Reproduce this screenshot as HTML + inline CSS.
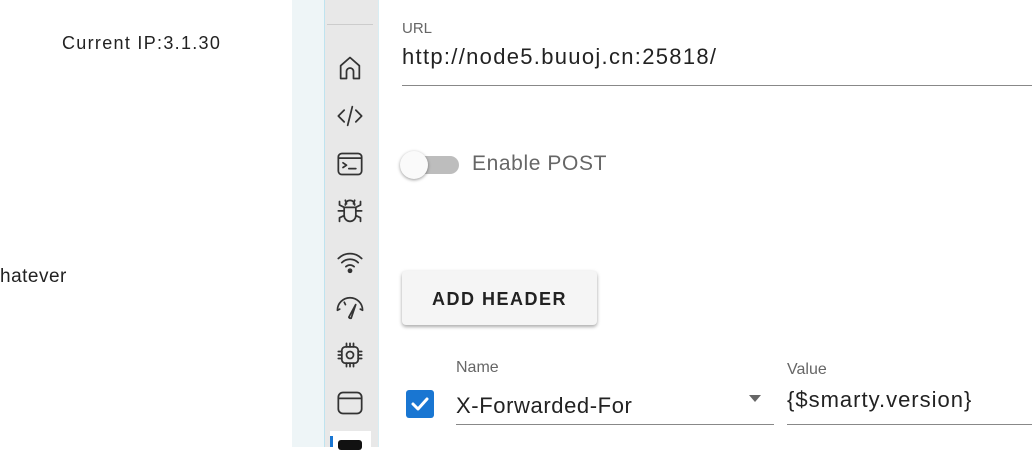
<!DOCTYPE html><html><head><style>
body{margin:0;width:1032px;height:447px;overflow:hidden;position:relative;font-family:"Liberation Sans",Arial,sans-serif;background:#fff}
.a{position:absolute;white-space:nowrap}
svg{position:absolute;fill:none;stroke:#333;stroke-width:1.5;stroke-linecap:round;stroke-linejoin:round}
</style></head><body>
<div class="a" style="left:62px;top:33px;font-size:18px;letter-spacing:1.3px;color:#222">Current IP:3.1.30</div>
<div class="a" style="left:0;top:266px;font-size:19px;letter-spacing:0.5px;color:#222">hatever</div>
<div class="a" style="left:292px;top:0;width:32px;height:447px;background:#eef5f7;border-right:1px solid #bfe3ef"></div>
<div class="a" style="left:325px;top:0;width:53px;height:447px;background:#e8e8e8;border-right:1px solid #d8edf3"></div>
<div class="a" style="left:327px;top:24px;width:46px;height:1px;background:#ccc"></div>
<svg style="left:336px;top:54px" width="28" height="28" viewBox="0 0 24 24"><path d="M4 21V10L12 3l8 7v11h-5v-6a3 3 0 0 0-6 0v6z"/></svg>
<svg style="left:336px;top:102px" width="28" height="28" viewBox="0 0 24 24"><path d="M7 7l-5 5 5 5M17 7l5 5-5 5M14 4l-4 16"/></svg>
<svg style="left:336px;top:150px" width="28" height="28" viewBox="0 0 24 24"><rect x="2" y="3" width="20" height="18" rx="3"/><path d="M2 7h20M6 11l3 2-3 2M11 16h6"/></svg>
<svg style="left:336px;top:198px" width="28" height="28" viewBox="0 0 24 24"><path d="M8 6a4 4 0 0 1 8 0M7 8h10v7a5 5 0 0 1-10 0zM8 2l1 3M16 2l-1 3M7 11H2M17 11h5M7 15l-4 2v3M17 15l4 2v3M7 8L3 6v-3M17 8l4-2v-3"/></svg>
<svg style="left:336px;top:248px" width="28" height="28" viewBox="0 0 24 24"><path d="M2 9a14 14 0 0 1 20 0M5 12.5a10 10 0 0 1 14 0M8.5 16a5 5 0 0 1 7 0"/><circle cx="12" cy="19.5" r="1.3" fill="#333"/></svg>
<svg style="left:334px;top:294px" width="32" height="28" viewBox="0 0 28 24"><path d="M3 14a11 11 0 0 1 22 0M3 14l2-1M9 7l1 2M25 14l-2-1M15 21l4-12-6 11a2 2 0 0 0 2 1z"/></svg>
<svg style="left:336px;top:341px" width="28" height="28" viewBox="0 0 24 24"><rect x="5" y="5" width="14" height="14" rx="3"/><circle cx="12" cy="12" r="3"/><path d="M9 2v3M12 2v3M15 2v3M9 19v3M12 19v3M15 19v3M2 9h3M2 12h3M2 15h3M19 9h3M19 12h3M19 15h3"/></svg>
<svg style="left:336px;top:389px" width="28" height="28" viewBox="0 0 24 24"><rect x="2" y="3" width="20" height="18" rx="4"/><path d="M2 8h20"/></svg>
<div class="a" style="left:330px;top:431px;width:41px;height:20px;background:#fff"></div>
<div class="a" style="left:330px;top:436px;width:3px;height:11px;background:#1976d2"></div>
<div class="a" style="left:338px;top:440px;width:24px;height:10px;background:#111;border-radius:3px"></div>
<div class="a" style="left:402px;top:20px;font-size:15px;color:#666">URL</div>
<div class="a" style="left:402px;top:44px;font-size:22px;letter-spacing:1.3px;color:#222">http://node5.buuoj.cn:25818/</div>
<div class="a" style="left:402px;top:85px;width:630px;height:1px;background:#888"></div>
<div class="a" style="left:404px;top:156px;width:55px;height:18px;border-radius:9px;background:#bdbdbd"></div>
<div class="a" style="left:400px;top:151px;width:28px;height:28px;border-radius:50%;background:#fafafa;box-shadow:0 1px 3px rgba(0,0,0,.4)"></div>
<div class="a" style="left:472px;top:152px;font-size:21px;letter-spacing:0.6px;color:#666">Enable POST</div>
<div class="a" style="left:402px;top:271px;width:195px;height:54px;background:#f5f5f5;border-radius:4px;box-shadow:0 2px 3px rgba(0,0,0,.25),0 1px 5px rgba(0,0,0,.12);font-size:18px;font-weight:bold;letter-spacing:1.5px;color:#222;text-align:center;line-height:56px">ADD HEADER</div>
<div class="a" style="left:456px;top:359px;font-size:16px;color:#666">Name</div>
<div class="a" style="left:787px;top:361px;font-size:16px;color:#666">Value</div>
<div class="a" style="left:406px;top:390px;width:28px;height:28px;background:#1976d2;border-radius:3px"></div>
<svg style="left:406px;top:390px;stroke:#fff;stroke-width:3" width="28" height="28" viewBox="0 0 28 28"><path d="M7 14l5 5 9-10"/></svg>
<div class="a" style="left:456px;top:393px;font-size:22px;letter-spacing:0.6px;color:#222">X-Forwarded-For</div>
<div class="a" style="left:749px;top:395px;width:0;height:0;border-left:6px solid transparent;border-right:6px solid transparent;border-top:7px solid #666"></div>
<div class="a" style="left:456px;top:424px;width:318px;height:1px;background:#888"></div>
<div class="a" style="left:787px;top:387px;font-size:22px;letter-spacing:1px;color:#222">{$smarty.version}</div>
<div class="a" style="left:787px;top:424px;width:245px;height:1px;background:#888"></div>
</body></html>
